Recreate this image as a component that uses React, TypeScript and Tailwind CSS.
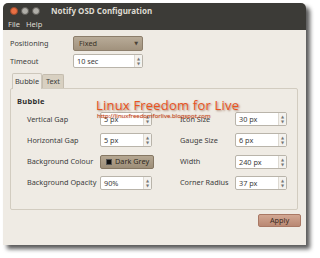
import React from 'react';

const FONT = { fontFamily: '"Noto Sans", "DejaVu Sans", sans-serif' };

function Spin({ value, w = 'w-[52px]' }: { value: string; w?: string }) {
  return (
    <div className={`${w} h-[14px] flex items-stretch bg-white border border-[#b9b4aa] rounded-[2px]`}>
      <div className="flex-1 pl-[3px] text-[7.3px] leading-[12px] text-[#3c3c3c] whitespace-nowrap">{value}</div>
      <div className="w-[8px] flex flex-col items-center justify-between py-[1px] bg-[#f4f2ee] border-l border-[#dedad2]">
        <span className="text-[4px] leading-[5px] text-[#777]">▲</span>
        <span className="text-[4px] leading-[5px] text-[#777]">▼</span>
      </div>
    </div>
  );
}

function Row({ label, children }: { label: string; children: React.ReactNode }) {
  return (
    <div className="flex items-center h-[14px]">
      <div className="w-[73px] text-[7.3px] text-[#3c3c3c] whitespace-nowrap">{label}</div>
      {children}
    </div>
  );
}

function RightRow({ label, value }: { label: string; value: string }) {
  return (
    <div className="flex items-center h-[14px]">
      <div className="w-[55px] text-[7.3px] text-[#3c3c3c] whitespace-nowrap">{label}</div>
      <Spin value={value} />
    </div>
  );
}

export default function App() {
  return (
    <div className="w-[320px] h-[258px] bg-white pt-[3px] pl-[3px]" style={FONT}>
      <div className="w-[303px] h-[242px] rounded-t-[5px] bg-[#efebe4] shadow-[4px_4px_4px_rgba(0,0,0,0.65)] flex flex-col relative">
        {/* title + menu */}
        <div className="h-[27px] bg-[#3c3b37] rounded-t-[5px] flex flex-col">
          <div className="h-[16px] flex items-center pl-[7px] gap-[3px]">
            <span className="w-[8px] h-[8px] rounded-full bg-[#e96f43] border border-[#9b4a2c]" />
            <span className="w-[8px] h-[8px] rounded-full bg-[#b0aea8] border border-[#5e5c57]" />
            <span className="w-[8px] h-[8px] rounded-full bg-[#b0aea8] border border-[#5e5c57]" />
            <span className="ml-[8px] text-[8px] font-bold text-[#dfdbd2] whitespace-nowrap">Notify OSD Configuration</span>
          </div>
          <div className="h-[11px] flex items-center pl-[5px] gap-[6px] text-[7.5px] text-[#dfdbd2] leading-none">
            <span>File</span>
            <span>Help</span>
          </div>
        </div>

        <div className="flex flex-col pl-[7px] pt-[6px]">
          <div className="flex items-center h-[15px]">
            <div className="w-[63px] text-[7.3px] text-[#3c3c3c]">Positioning</div>
            <div className="w-[70px] h-[15px] rounded-[2px] bg-gradient-to-b from-[#b8ab98] to-[#a1927d] border border-[#8c7e6b] flex items-center justify-between pl-[5px] pr-[4px]">
              <span className="text-[7.3px] text-[#3a3327]">Fixed</span>
              <span className="text-[5px] text-[#4a4236]">▼</span>
            </div>
          </div>
          <div className="flex items-center h-[14px] mt-[3px]">
            <div className="w-[63px] text-[7.3px] text-[#3c3c3c]">Timeout</div>
            <Spin value="10 sec" w="w-[70px]" />
          </div>

          {/* tabs */}
          <div className="flex items-end h-[16px] mt-[4px] pl-[2px]">
            <div className="h-[16px] w-[30px] flex items-center justify-center bg-[#efebe4] border border-b-0 border-[#cdc7bb] rounded-t-[2px] text-[7.3px] text-[#3c3c3c] relative top-[1px]">Bubble</div>
            <div className="h-[14px] w-[22px] flex items-center justify-center bg-[#d8d0c1] border border-b-0 border-[#c4bcae] rounded-t-[2px] text-[7.3px] text-[#3c3c3c]">Text</div>
          </div>
          <div className="w-[288px] h-[122px] border border-[#d2ccc0] rounded-[2px] pt-[6px] pl-[6px]">
            <div className="text-[7.5px] font-bold text-[#2e2e2e] leading-[12px] tracking-[0.3px]">Bubble</div>
            <div className="flex mt-[5px] pl-[10px]">
              <div className="flex flex-col gap-[7.3px] w-[153px]">
                <Row label="Vertical Gap"><Spin value="5 px" /></Row>
                <Row label="Horizontal Gap"><Spin value="5 px" /></Row>
                <Row label="Background Colour">
                  <div className="w-[54px] h-[14px] rounded-[2px] bg-gradient-to-b from-[#b5a792] to-[#9d8e78] border border-[#857763] flex items-center pl-[5px] gap-[3px]">
                    <span className="w-[6px] h-[6px] bg-[#111] border border-[#555]" />
                    <span className="text-[7.3px] text-[#2f2a22] whitespace-nowrap">Dark Grey</span>
                  </div>
                </Row>
                <Row label="Background Opacity"><Spin value="90%" /></Row>
              </div>
              <div className="flex flex-col gap-[7.3px]">
                <RightRow label="Icon Size" value="30 px" />
                <RightRow label="Gauge Size" value="6 px" />
                <RightRow label="Width" value="240 px" />
                <RightRow label="Corner Radius" value="37 px" />
              </div>
            </div>
          </div>

          <div className="flex justify-end w-[291px] mt-[4px]">
            <div className="w-[43px] h-[13px] rounded-[2px] bg-gradient-to-b from-[#d2a792] to-[#b98873] border border-[#a97864] flex items-center justify-center text-[7.3px] text-[#3a2a22]">Apply</div>
          </div>
        </div>

        {/* watermark */}
        <div className="absolute left-[93px] top-[95px] flex flex-col items-start pointer-events-none">
          <span className="text-[13px] leading-[15px] text-[#e8531f] [text-shadow:1px_1px_2px_rgba(120,60,30,0.6)] tracking-[0.2px] whitespace-nowrap" style={{ fontFamily: '"Open Sans", "Noto Sans", sans-serif' }}>Linux Freedom for Live</span>
          <span className="text-[6px] leading-[6px] text-[#d24a1c] ml-[1px] [text-shadow:0_0_1px_rgba(120,60,30,0.5)] whitespace-nowrap">http://linuxfreedomforlive.blogspot.com</span>
        </div>
      </div>
    </div>
  );
}
